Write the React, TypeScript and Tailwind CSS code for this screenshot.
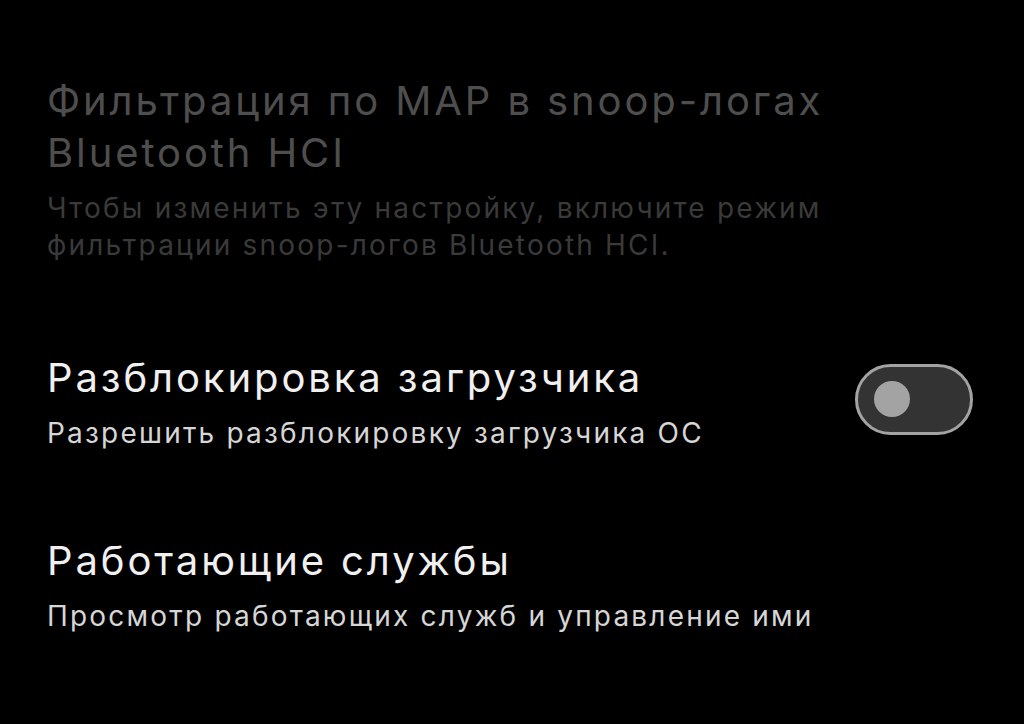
import React from "react";

function Row({
  title,
  subtitle,
  disabled,
  right,
  className,
}: {
  title: React.ReactNode;
  subtitle: React.ReactNode;
  disabled?: boolean;
  right?: React.ReactNode;
  className?: string;
}) {
  return (
    <div className={"flex items-center pl-[47px] pr-[51px] " + (className ?? "")}>
      <div className="flex-1 min-w-0">
        <div
          className={
            "whitespace-nowrap text-[40px] leading-[52px] tracking-[2.9px] " +
            (disabled ? "text-[#4e4e4e]" : "text-[#f0f0f0]")
          }
        >
          {title}
        </div>
        <div
          className={
            "mt-[11px] whitespace-nowrap text-[28px] leading-[37px] tracking-[2.2px] " +
            (disabled ? "text-[#3a3a3a]" : "text-[#d6d6d6]")
          }
        >
          {subtitle}
        </div>
      </div>
      {right}
    </div>
  );
}

function Toggle() {
  return (
    <div className="mb-[6px] flex h-[71px] w-[118px] shrink-0 items-center rounded-full border-[3px] border-[#a3a3a3] bg-[#333333] pl-[16px]">
      <div className="h-[36px] w-[36px] rounded-full bg-[#a3a3a3]" />
    </div>
  );
}

export default function App() {
  return (
    <div
      className="h-[724px] w-[1024px] overflow-hidden bg-black pt-[75px]"
      style={{ fontFamily: "Inter, Roboto, sans-serif" }}
    >
      <Row
        disabled
        title={
          <>
            Фильтрация по MAP в snoop-логах
            <br />
            Bluetooth HCI
          </>
        }
        subtitle={
          <>
            Чтобы изменить эту настройку, включите режим
            <br />
            фильтрации snoop-логов Bluetooth HCI.
          </>
        }
      />
      <Row
        className="mt-[88px]"
        title="Разблокировка загрузчика"
        subtitle="Разрешить разблокировку загрузчика ОС"
        right={<Toggle />}
      />
      <Row
        className="mt-[83px]"
        title="Работающие службы"
        subtitle="Просмотр работающих служб и управление ими"
      />
    </div>
  );
}
